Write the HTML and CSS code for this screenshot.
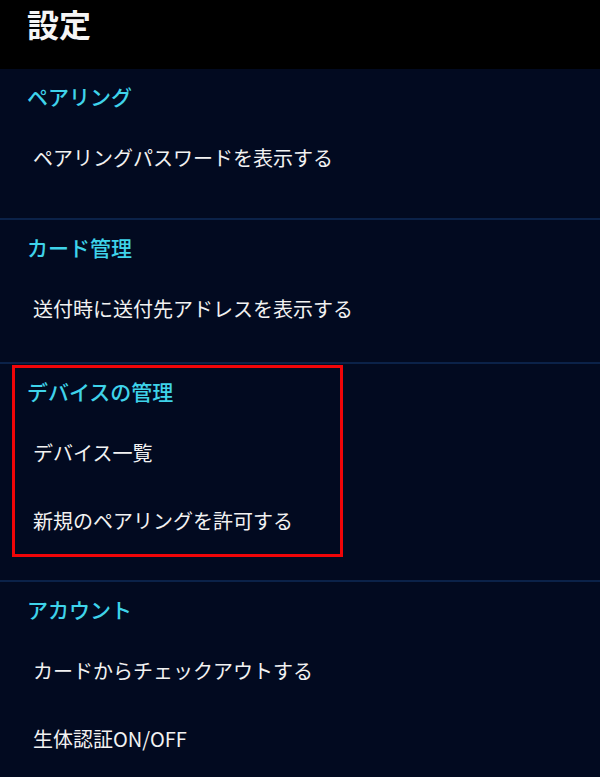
FILE: index.html
```html
<!DOCTYPE html>
<html lang="ja">
<head>
<meta charset="utf-8">
<title>設定</title>
<link rel="stylesheet" href="styles.css">
</head>
<body>
<header class="topbar"><h1 class="title">設定</h1></header>
<main class="settings">
  <section class="group">
    <h2 class="group-title">ペアリング</h2>
    <div class="item">ペアリングパスワードを表示する</div>
  </section>
  <section class="group group-short">
    <h2 class="group-title">カード管理</h2>
    <div class="item">送付時に送付先アドレスを表示する</div>
  </section>
  <section class="group group-marked">
    <div class="highlight"></div>
    <h2 class="group-title">デバイスの管理</h2>
    <div class="item">デバイス一覧</div>
    <div class="item">新規のペアリングを許可する</div>
  </section>
  <section class="group group-last">
    <h2 class="group-title">アカウント</h2>
    <div class="item">カードからチェックアウトする</div>
    <div class="item">生体認証ON/OFF</div>
  </section>
</main>
</body>
</html>
```

FILE: styles.css
```css
* { box-sizing: border-box; }
html, body {
  margin: 0;
  padding: 0;
  background: #020a20;
  font-family: "Noto Sans CJK JP", "Noto Sans", sans-serif;
}
body { width: 600px; height: 777px; overflow: hidden; }
.topbar {
  height: 69px;
  background: #000;
  padding-left: 27px;
}
.title {
  margin: 0;
  font-size: 32px;
  line-height: 46px;
  font-weight: 700;
  color: #f5f5f5;
}
.settings { display: flex; flex-direction: column; }
.group {
  position: relative;
  display: flex;
  flex-direction: column;
  padding-bottom: 26px;
  border-bottom: 2px solid #0b2249;
}
.group-short { padding-bottom: 19px; }
.group-marked { padding-bottom: 25px; }
.group-last { border-bottom: none; }
.group-title {
  margin: 0;
  height: 55px;
  line-height: 55px;
  padding-left: 27px;
  font-size: 21px;
  font-weight: 500;
  color: #3fd3ea;
}
.item {
  height: 68px;
  line-height: 68px;
  padding-left: 33px;
  font-size: 20px;
  font-weight: 400;
  color: #f2f2f2;
}
.highlight {
  position: absolute;
  left: 12px;
  top: 1px;
  width: 331px;
  height: 192px;
  border: 3px solid #f00508;
  pointer-events: none;
}
```
